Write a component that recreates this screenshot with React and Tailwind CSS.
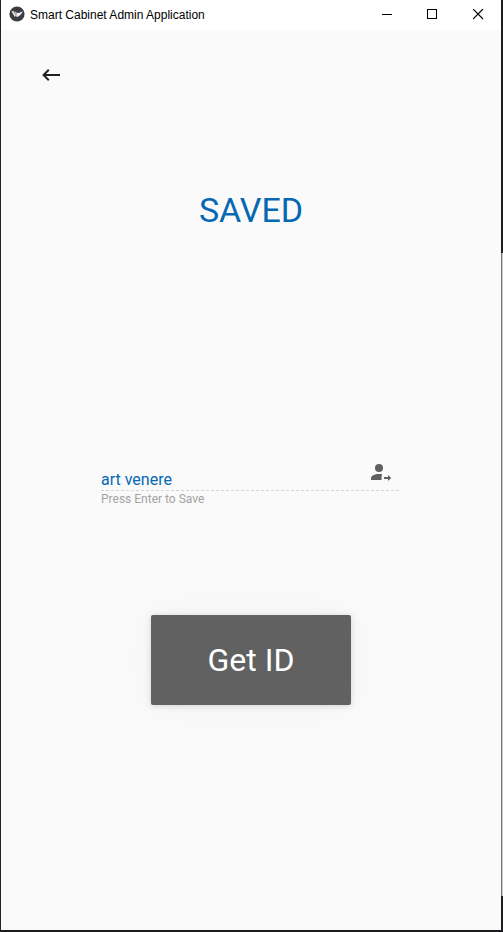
import React, { useState } from "react";

function AppLogo() {
  return (
    <svg viewBox="0 0 16 16" className="size-4 shrink-0" aria-hidden="true">
      <circle cx="8" cy="8" r="7.6" fill="#3b3d40" />
      <path d="M2.4 5.2L4.6 5L7 10L5.6 10.8Z" fill="#e4e4e4" />
      <path d="M5.4 5.2L7.4 6.6L8.4 10.4L7.2 10.8Z" fill="#cfcfcf" />
      <path d="M7.6 6.4L9.8 7L14 5.2L11.6 8.8L8.4 11.2Z" fill="#f2f2f2" />
    </svg>
  );
}

function WindowButton({ label, children }) {
  return (
    <button type="button" aria-label={label} className="flex h-7 w-[46px] items-center justify-center">
      <svg width="11" height="11" viewBox="0 0 11 11" fill="none" stroke="#000" aria-hidden="true">
        {children}
      </svg>
    </button>
  );
}

function TitleBar() {
  return (
    <header className="flex h-[30px] items-start bg-white">
      <div className="flex h-7 flex-1 items-center gap-[5px] pl-2">
        <AppLogo />
        <h1 className="pt-0.5 font-['Liberation_Sans',Arial,sans-serif] text-xs whitespace-nowrap text-black">
          Smart Cabinet Admin Application
        </h1>
      </div>
      <WindowButton label="Minimize">
        <path d="M0.5 5.5H10.5" shapeRendering="crispEdges" />
      </WindowButton>
      <WindowButton label="Maximize">
        <path d="M0.5 0.5H9.5V9.5H0.5Z" shapeRendering="crispEdges" />
      </WindowButton>
      <WindowButton label="Close">
        <path d="M0 0L10 10M10 0L0 10" strokeWidth="1.2" />
      </WindowButton>
    </header>
  );
}

export default function App() {
  const [name, setName] = useState("art venere");

  return (
    <div className="flex min-h-screen border-b-2 border-l border-b-[#1c1c1e] border-l-[#222224] bg-[#fafafa] font-[Roboto,sans-serif]">
      <div className="flex flex-1 flex-col">
        <TitleBar />
        <main className="flex flex-1 flex-col">
          <button type="button" aria-label="Back" className="mt-[33px] ml-[38px] size-6 text-[#212121]">
            <svg viewBox="0 0 24 24" className="size-6" fill="currentColor" aria-hidden="true">
              <path d="M21 11V13H7L10.5 16.5L9.08 17.92L3.16 12L9.08 6.08L10.5 7.5L7 11H21Z" />
            </svg>
          </button>

          <h2 className="mt-[103px] text-center text-[34px] leading-10 text-[#0668b3]">SAVED</h2>

          <div className="mx-auto mt-[230px] w-3/5">
            <div className="mr-0.5 flex h-[31px] border-b border-dashed border-[#d6d6d6]">
              <input
                id="name"
                aria-label="Name"
                aria-describedby="name-hint"
                value={name}
                onChange={(e) => setName(e.target.value)}
                className="min-w-0 flex-1 self-end bg-transparent text-base leading-5 text-[#0668b3] outline-none"
              />
              <svg viewBox="0 0 24 24" className="mr-1.5 size-6 text-[#606060]" fill="currentColor" aria-hidden="true">
                <circle cx="10" cy="8" r="4" />
                <path d="M13.2 14.2C12.2 14 11.1 14 10 14C5.6 14 2 15.8 2 18V20H12.6C12.4 18 12.5 16 13.2 14.2Z" />
                <path d="M15 17H19V15L22.2 18L19 21V19H15Z" />
              </svg>
            </div>
            <p id="name-hint" className="text-xs leading-4 text-[#a3a3a3]">Press Enter to Save</p>
          </div>

          <button
            type="button"
            className="mx-auto mt-[108px] h-[90px] w-2/5 rounded-xs bg-[#616161] text-[32px] text-white shadow-[0_1px_6px_rgba(0,0,0,0.14),0_0_40px_rgba(0,0,0,0.04)]"
          >
            Get ID
          </button>
        </main>
      </div>
      <div className="flex w-0.5 flex-col" aria-hidden="true">
        <div className="h-[253px] bg-[#1b1d1f]" />
        <div className="flex-1 border-l border-[#777777] bg-[#c8c8c8]" />
        <div className="h-[34px] bg-[#1b1d1f]" />
      </div>
    </div>
  );
}
